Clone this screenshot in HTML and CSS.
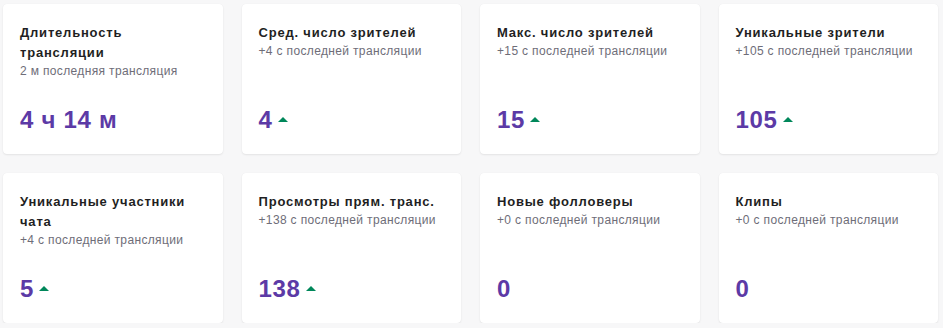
FILE: index.html
```html
<!DOCTYPE html>
<html lang="ru">
<head>
    <meta charset="UTF-8">
    <meta name="viewport" content="width=device-width, initial-scale=1.0">
    <title>Статистика трансляции</title>
    <link rel="stylesheet" href="styles.css">
</head>
<body>

    <div class="stats">
        <!-- Row 1 -->
        <div class="card">
            <div class="card-title">Длительность трансляции</div>
            <div class="card-sub">2 м последняя трансляция</div>
            <div class="card-value">4 ч 14 м</div>
        </div>
        <div class="card">
            <div class="card-title">Сред. число зрителей</div>
            <div class="card-sub">+4 с последней трансляции</div>
            <div class="card-value">4 <span class="up"></span></div>
        </div>
        <div class="card">
            <div class="card-title">Макс. число зрителей</div>
            <div class="card-sub">+15 с последней трансляции</div>
            <div class="card-value">15 <span class="up"></span></div>
        </div>
        <div class="card">
            <div class="card-title">Уникальные зрители</div>
            <div class="card-sub">+105 с последней трансляции</div>
            <div class="card-value">105 <span class="up"></span></div>
        </div>

        <!-- Row 2 -->
        <div class="card">
            <div class="card-title">Уникальные участники чата</div>
            <div class="card-sub">+4 с последней трансляции</div>
            <div class="card-value">5 <span class="up"></span></div>
        </div>
        <div class="card">
            <div class="card-title">Просмотры прям. транс.</div>
            <div class="card-sub">+138 с последней трансляции</div>
            <div class="card-value">138 <span class="up"></span></div>
        </div>
        <div class="card">
            <div class="card-title">Новые фолловеры</div>
            <div class="card-sub">+0 с последней трансляции</div>
            <div class="card-value">0</div>
        </div>
        <div class="card">
            <div class="card-title">Клипы</div>
            <div class="card-sub">+0 с последней трансляции</div>
            <div class="card-value">0</div>
        </div>
    </div>

</body>
</html>
```

FILE: styles.css
```css
* {
    margin: 0;
    padding: 0;
    box-sizing: border-box;
}

body {
    font-family: 'Liberation Sans', Arial, sans-serif;
    background-color: #f7f7f8;
    color: #1f1f23;
    padding: 4px 5px 0 3px;
}

.stats {
    display: grid;
    grid-template-columns: repeat(4, 1fr);
    gap: 19px;
}

.card {
    display: flex;
    flex-direction: column;
    height: 150px;
    padding: 19px 17px 20px 17px;
    background-color: #fff;
    border-radius: 4px;
    box-shadow: 0 1px 2px rgba(0, 0, 0, 0.08), 0 0 1px rgba(0, 0, 0, 0.06);
}

.card-title {
    font-size: 13px;
    font-weight: bold;
    line-height: 20px;
    letter-spacing: 0.8px;
    color: #1f1f23;
}

.card-sub {
    font-size: 12px;
    line-height: 17px;
    letter-spacing: 0.35px;
    color: #6e6d78;
}

.card-value {
    margin-top: auto;
    display: flex;
    align-items: center;
    gap: 5px;
    font-size: 24px;
    font-weight: bold;
    line-height: 28px;
    letter-spacing: 0.7px;
    color: #5c3aa6;
}

/* small green up arrow */
.up {
    width: 0;
    height: 0;
    border-left: 5px solid transparent;
    border-right: 5px solid transparent;
    border-bottom: 5px solid #00875a;
    margin-top: -2px;
}
```
